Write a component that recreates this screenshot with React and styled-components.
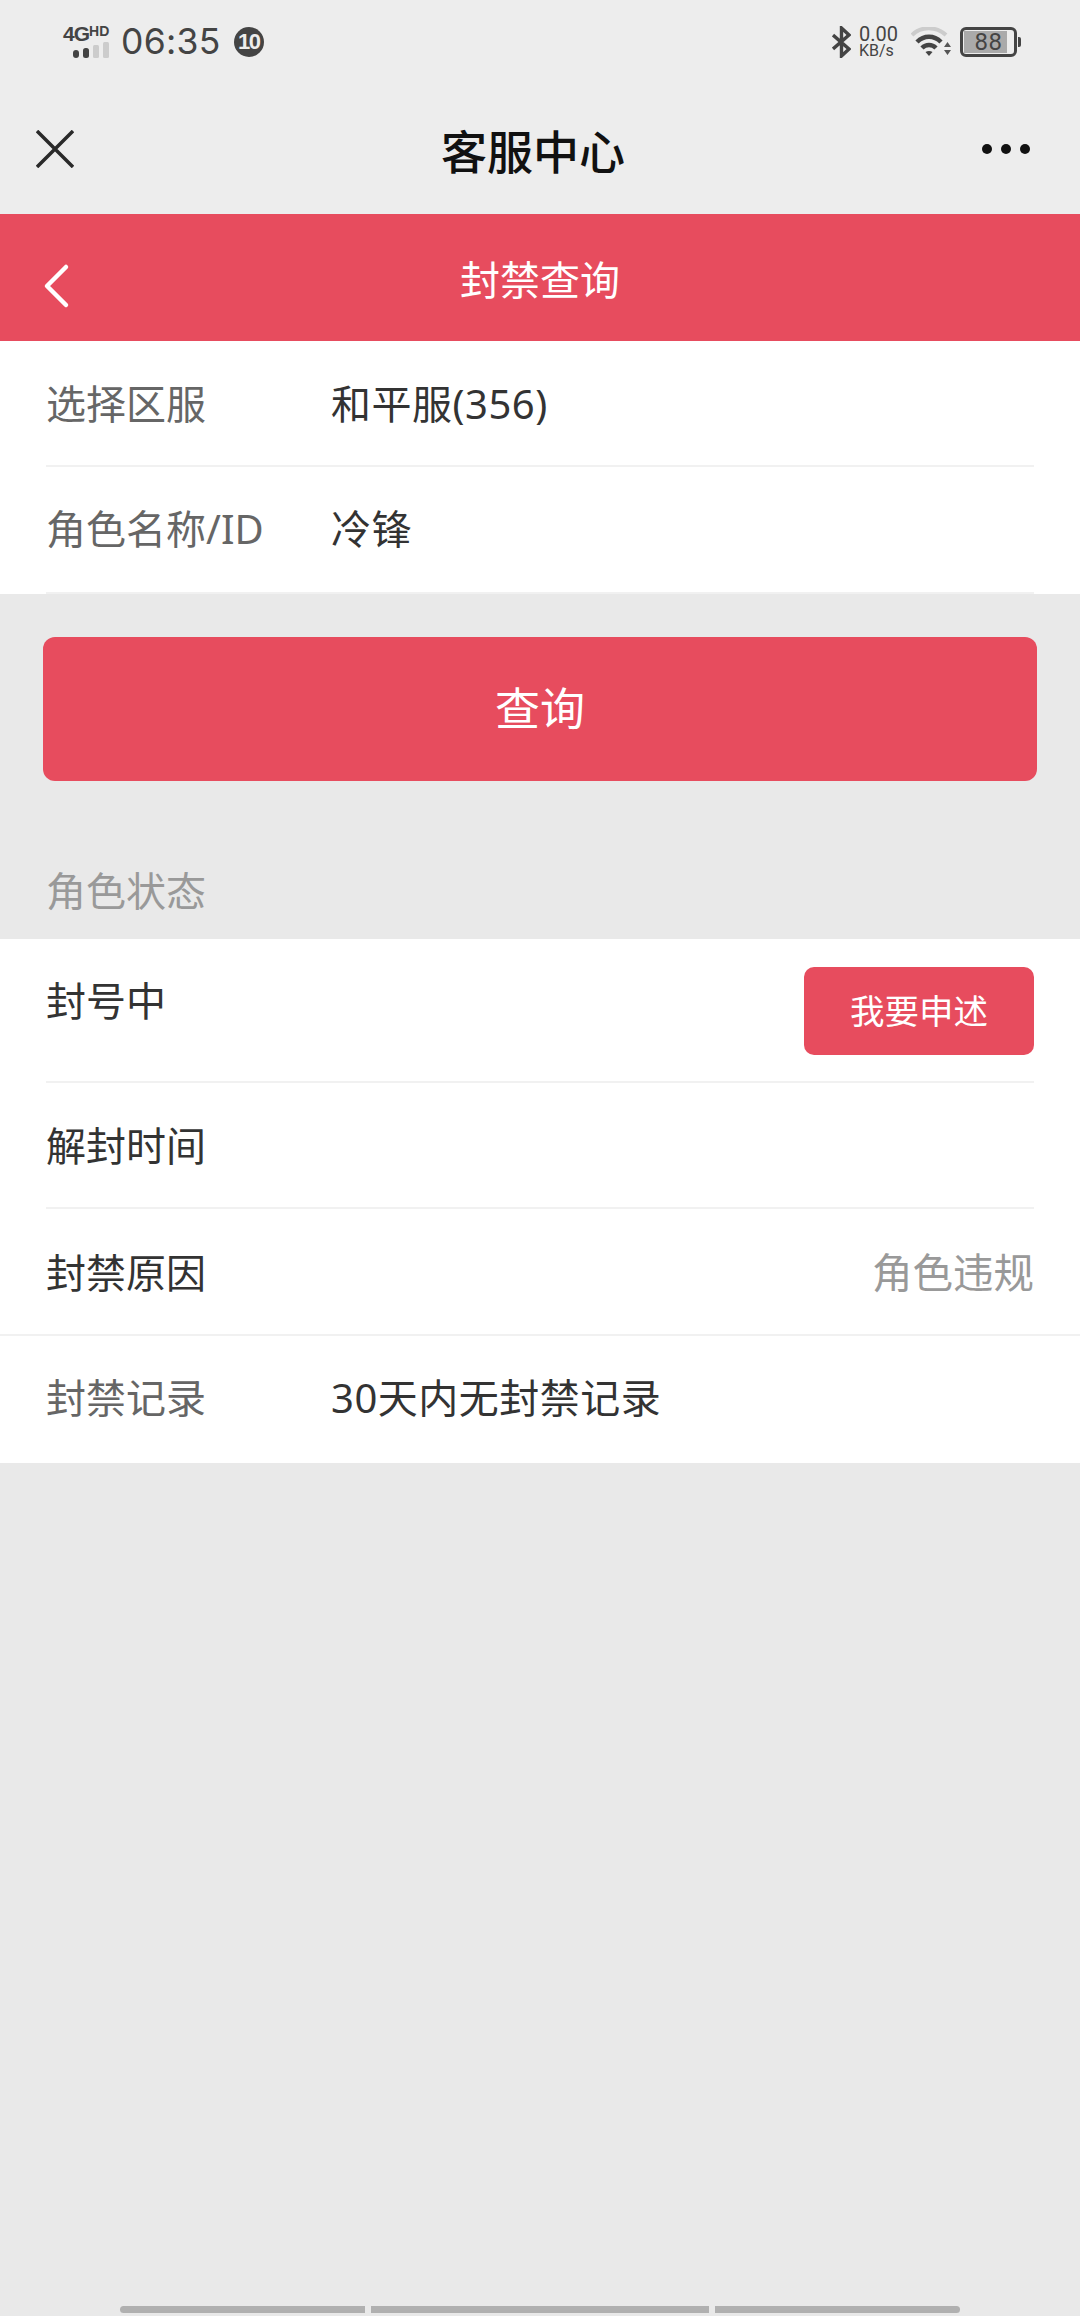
import React from "react"
import styled, { createGlobalStyle } from 'styled-components'

const red = '#e74c5e'

const GlobalStyle = createGlobalStyle`
  html, body {
    margin: 0;
    padding: 0;
    background: #e9e9e9;
  }
  * {
    box-sizing: border-box;
  }
`

const Page = styled.div`
  width: 1080px;
  height: 2316px;
  display: flex;
  flex-direction: column;
  overflow: hidden;
  background: #e9e9e9;
  font-family: "Noto Sans", "Noto Sans CJK SC", sans-serif;
`

const TopArea = styled.div`
  height: 214px;
  background: #ededed;
`

const StatusBar = styled.div`
  height: 84px;
  display: flex;
  justify-content: space-between;
  align-items: flex-start;
  padding: 25px 63px 0 63px;
  color: #444;
`

const StatusGroup = styled.div`
  display: flex;
  align-items: center;
  height: 34px;
`

const NetBlock = styled.div`
  width: 46px;
  display: flex;
  flex-direction: column;
  align-items: flex-end;
`

const NetText = styled.div`
  display: flex;
  align-items: flex-start;
  height: 16px;
  width: 46px;
  font-family: "Liberation Sans", sans-serif;
  font-weight: 700;
  line-height: 16px;
  font-size: 21px;
  letter-spacing: -1px;
  white-space: nowrap;

  span {
    font-size: 14px;
    line-height: 11px;
    letter-spacing: 0;
  }
`

const Time = styled.div`
  margin-left: 12px;
  font-family: Inter, sans-serif;
  font-size: 35.5px;
  line-height: 34px;
  letter-spacing: 0.3px;
`

const Badge = styled.div`
  margin-left: 13px;
  width: 30px;
  height: 30px;
  border-radius: 50%;
  background: #444;
  color: #ededed;
  display: flex;
  align-items: center;
  justify-content: center;
  font-family: "Liberation Sans", sans-serif;
  font-size: 22px;
  font-weight: 700;
  letter-spacing: -1.5px;
`

const Speed = styled.div`
  margin-left: 8px;
  width: 40px;
  display: flex;
  flex-direction: column;
  font-family: Roboto, sans-serif;
`

const SpeedValue = styled.span`
  font-size: 20px;
  line-height: 17px;
`

const SpeedUnit = styled.span`
  font-size: 16px;
  line-height: 15px;
`

const WifiIcon = styled.svg`
  width: 40px;
  height: 30px;
  margin-left: 12px;
`

const Battery = styled.div`
  position: relative;
  margin-left: 9px;
  width: 57px;
  height: 30px;
  border: 3px solid #444;
  border-radius: 6px;
  display: flex;
  align-items: center;
  justify-content: center;

  &::after {
    content: '';
    position: absolute;
    right: -7px;
    top: 7px;
    width: 3px;
    height: 10px;
    border-radius: 0 2px 2px 0;
    background: #444;
  }
`

const BatteryFill = styled.div`
  position: absolute;
  left: 1px;
  top: 1px;
  bottom: 1px;
  background: #aaa;
`

const BatteryText = styled.span`
  position: relative;
  font-family: Roboto, sans-serif;
  font-size: 24px;
  line-height: 24px;
  letter-spacing: 0.5px;
  color: #444;
`

const NavBar = styled.div`
  height: 130px;
  display: grid;
  grid-template-columns: 1fr auto 1fr;
  align-items: center;
  padding: 0 14px 0 0;
  margin-top: -1px;
`

const CloseIcon = styled.svg`
  width: 38px;
  height: 38px;
  margin-left: 36px;
  margin-top: 2px;
`

const NavTitle = styled.h1`
  margin: 6px 0 0;
  font-size: 46px;
  font-weight: 500;
  color: #111;
  line-height: 60px;
`

const MoreDots = styled.div`
  justify-self: end;
  margin-top: 2px;
  margin-right: 36px;
  display: flex;
  gap: 9px;
`

const Dot = styled.span`
  width: 10px;
  height: 10px;
  border-radius: 50%;
  background: #111;
`

const SubHeader = styled.div`
  position: relative;
  height: 127px;
  background: ${red};
  display: flex;
  align-items: center;
  justify-content: center;
`

const BackIcon = styled.svg`
  position: absolute;
  left: 42px;
  top: 49px;
  width: 28px;
  height: 46px;
`

const SubTitle = styled.h2`
  margin: 1px 0 0;
  font-size: 40px;
  font-weight: 400;
  color: #fff;
`

const Card = styled.div`
  background: #fff;
`

const Row = styled.div`
  display: flex;
  align-items: ${p => (p.$top ? 'flex-start' : 'center')};
  justify-content: ${p => (p.$split ? 'space-between' : 'flex-start')};
  height: ${p => p.$height || 126}px;
  margin: 0 ${p => (p.$wide ? 0 : 46)}px;
  padding: 0 ${p => (p.$wide ? 46 : 0)}px ${p => p.$lift || 0}px;
  padding-top: ${p => (p.$top || p.$lift ? 0 : 2)}px;
  border-bottom: 2px solid ${p => (p.$plain ? 'transparent' : '#f1f1f1')};
  font-size: 40px;
  line-height: 124px;
`

const Label = styled.span`
  width: 285px;
  flex-shrink: 0;
  color: ${p => (p.$dark ? '#333' : '#666')};
`

const Value = styled.span`
  color: ${p => (p.$muted ? '#999' : '#333')};
  font-size: ${p => (p.$muted ? 40.5 : 40)}px;
  letter-spacing: ${p => (p.$muted ? 0 : 0.5)}px;
`

const QueryButton = styled.button`
  display: block;
  width: 994px;
  height: 144px;
  margin: 43px 0 0 43px;
  padding: 0 0 6px;
  border: none;
  border-radius: 12px;
  background: ${red};
  color: #fff;
  font-family: inherit;
  font-size: 45px;
`

const SectionLabel = styled.div`
  height: 158px;
  padding-top: 80px;
  padding-left: 46px;
  font-size: 40px;
  line-height: 60px;
  color: #999;
`

const AppealButton = styled.button`
  width: 230px;
  height: 88px;
  margin-top: 28px;
  padding: 0 0 4px;
  border: none;
  border-radius: 10px;
  background: ${red};
  color: #fff;
  font-family: inherit;
  font-size: 34.5px;
`

const HomeBar = styled.div`
  margin-top: auto;
  margin-bottom: 3px;
  padding-left: 120px;
  display: flex;
  gap: 6px;
`

const HomeSegment = styled.div`
  width: ${p => p.$width}px;
  height: 7px;
  background: #b0b0b0;
  border-radius: ${p => p.$radius};
`

const App = () => {
  return (
    <Page>
      <GlobalStyle />
      <TopArea>
        <StatusBar>
          <StatusGroup>
            <NetBlock>
              <NetText>4G<span>HD</span></NetText>
              <svg width="36" height="16" viewBox="0 0 36 16">
                <rect x="0" y="8" width="6" height="8" rx="3" fill="#444" />
                <rect x="10" y="6" width="6" height="10" rx="2.5" fill="#444" />
                <rect x="20" y="3" width="6" height="13" rx="1.5" fill="#ccc" />
                <rect x="30" y="0" width="6" height="16" rx="1.5" fill="#ccc" />
              </svg>
            </NetBlock>
            <Time>06:35</Time>
            <Badge>10</Badge>
          </StatusGroup>
          <StatusGroup>
            <svg width="19" height="32" viewBox="0 0 19 32" fill="none" stroke="#444" strokeWidth="3.4">
              <path d="M1 9 L17 23 L9.5 30 V2 L17 9 L1 23" />
            </svg>
            <Speed>
              <SpeedValue>0.00</SpeedValue>
              <SpeedUnit>KB/s</SpeedUnit>
            </Speed>
            <WifiIcon viewBox="0 0 40 30">
              <path d="M1 8 C10 -1 25 -1 35 8" fill="none" stroke="#ccc" strokeWidth="4" />
              <path d="M6 15 C13 8 23 8 30 15" fill="none" stroke="#444" strokeWidth="4.5" />
              <path d="M11 21 C15 17 21 17 25 21" fill="none" stroke="#444" strokeWidth="4.5" />
              <path d="M14.5 25 L18 29 L21.5 25 C19.5 23.5 16.5 23.5 14.5 25 Z" fill="#444" />
              <path d="M33 20 L36.5 15 L40 20 Z M33 23 L40 23 L36.5 28 Z" fill="#555" />
            </WifiIcon>
            <Battery>
              <BatteryFill style={{ width: `${88 * 0.49}px` }} />
              <BatteryText>88</BatteryText>
            </Battery>
          </StatusGroup>
        </StatusBar>
        <NavBar>
          <CloseIcon viewBox="0 0 38 38" fill="none" stroke="#2a2a2a" strokeWidth="3.5">
            <path d="M1 1 L37 37 M37 1 L1 37" />
          </CloseIcon>
          <NavTitle>客服中心</NavTitle>
          <MoreDots>
            <Dot />
            <Dot />
            <Dot />
          </MoreDots>
        </NavBar>
      </TopArea>
      <SubHeader>
        <BackIcon viewBox="0 0 28 46" fill="none" stroke="#fff" strokeWidth="4.5" strokeLinecap="round" strokeLinejoin="round">
          <path d="M24 4 L5 23 L24 42" />
        </BackIcon>
        <SubTitle>封禁查询</SubTitle>
      </SubHeader>
      <Card>
        <Row>
          <Label>选择区服</Label>
          <Value>和平服(356)</Value>
        </Row>
        <Row $height={127} $lift={1}>
          <Label>角色名称/ID</Label>
          <Value>冷锋</Value>
        </Row>
      </Card>
      <QueryButton>查询</QueryButton>
      <SectionLabel>角色状态</SectionLabel>
      <Card>
        <Row $top $split $height={144}>
          <Label $dark>封号中</Label>
          <AppealButton>我要申述</AppealButton>
        </Row>
        <Row>
          <Label $dark>解封时间</Label>
        </Row>
        <Row $split $wide $height={127}>
          <Label $dark>封禁原因</Label>
          <Value $muted>角色违规</Value>
        </Row>
        <Row $plain $wide $height={127} $lift={2}>
          <Label>封禁记录</Label>
          <Value>30天内无封禁记录</Value>
        </Row>
      </Card>
      <HomeBar>
        <HomeSegment $width={245} $radius="4px 0 0 4px" />
        <HomeSegment $width={338} $radius="0" />
        <HomeSegment $width={245} $radius="0 4px 4px 0" />
      </HomeBar>
    </Page>
  )
}

export default App
